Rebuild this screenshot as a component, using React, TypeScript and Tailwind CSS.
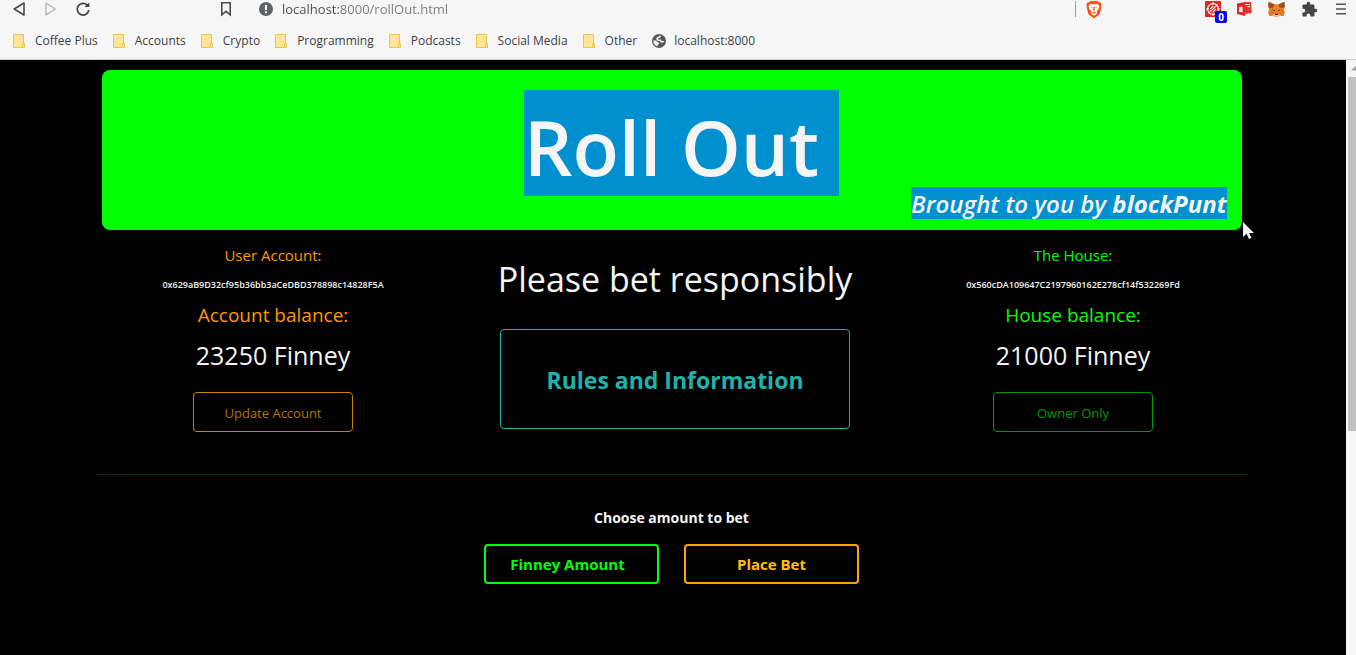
import { MdExtension } from "react-icons/md";

const bookmarks = ["Coffee Plus", "Accounts", "Crypto", "Programming", "Podcasts", "Social Media", "Other"];

function FolderIcon() {
  return (
    <svg className="h-4 w-3 shrink-0" viewBox="0 0 12 16" aria-hidden="true">
      <path d="M.5 1.5h10v13H.5z" fill="#ffe595" stroke="#e9c748" />
      <path d="M9.5 10.5h2v4h-2z" fill="#ffe595" stroke="#e9c748" />
    </svg>
  );
}

function GlobeIcon() {
  return (
    <svg width="14" height="14" viewBox="0 0 14 14" aria-hidden="true">
      <circle cx="7" cy="7" r="7" fill="#55585c" />
      <path d="M8.6 1.8 7.2 3.2 5 4.4 5.6 6l2.6.2 1 1.5h2.6" fill="none" stroke="#f6f6f6" strokeWidth="1.5" />
      <path d="M1.4 6.6h2.4l2.4 2 .9.1v1.6l-1.6.5v1.6A5.6 5.6 0 0 1 1.4 6.6z" fill="#f6f6f6" />
    </svg>
  );
}

function BraveIcon() {
  return (
    <svg width="16" height="19" viewBox="0 0 16 19" aria-hidden="true">
      <path d="M4.2 1h7.6l1.2 1.3 1.6.3L15.6 5l-.5 1.7.2 1-1.8 6.6L8 18.4l-5.5-4.1L.7 7.7l.2-1L.4 5l1-2.4L3 2.3z" fill="#fb4f14" />
      <path d="M4.4 3.8 8 4.4l3.6-.6L13.4 6l-.7 3-1.8 2 .2 2.4L8 15.7l-3.1-2.3.2-2.4-1.8-2-.7-3z" fill="#fff" />
      <path d="m4.4 6.7 2.3.3-.4.9zM11.6 6.7 9.3 7l.4.9zM7.4 6.2h1.2l.3 4L8 11l-.9-.8zM5.7 12.4 8 11.6l2.3.8L8 14z" fill="#fb6a35" />
    </svg>
  );
}

function BlockerIcon() {
  return (
    <svg width="16" height="16" viewBox="0 0 16 16" aria-hidden="true">
      <rect width="16" height="16" rx="1" fill="#e3261f" />
      <g fill="none" stroke="#fff">
        <circle cx="8" cy="8" r="5.4" strokeWidth="1.2" />
        <path d="M3.6 12.4 12.4 3.6M5 8.2l3.2-3.1M7.9 11.2l3.1-3.1M8 1v3M8 12v3M1 8h3M12 8h3" strokeWidth="1.1" />
      </g>
    </svg>
  );
}

function ReaderIcon() {
  return (
    <svg width="15" height="14" viewBox="0 0 15 14" aria-hidden="true">
      <path d="M0 1.5 8 0v14l-8-2z" fill="#e3261f" />
      <path d="M7.5 0H14l.8 11-7.3 1z" fill="#e3342b" />
      <path d="M2 5.2 5.6 4.5v6L2 9.8z" fill="#fff" />
      <path d="M8.5 2.5H13M10.5 4.7H13" stroke="#fff" strokeWidth="1" />
    </svg>
  );
}

function FoxIcon() {
  return (
    <svg width="17" height="16" viewBox="0 0 17 16" aria-hidden="true">
      <path d="m.8.8 5.6 2.4h4.2L16.2.8l.7 4-1 4 .8 3-1.4 3.4-3.4-.7-1.9 1.3H7l-1.9-1.3-3.4.7-1.4-3.4.8-3-1-4z" fill="#f08020" />
      <path d="m.8.8 5.6 2.8-.9 3-4.4.7-1-2.5zM16.2.8l-5.6 2.8.9 3 4.4.7 1-2.5z" fill="#94512c" />
      <path d="m1.2 9 4.2-.4 1 3.4-1.3 2-3.4.6L.3 12zM15.8 9l-4.2-.4-1 3.4 1.3 2 3.4.6 1.4-2.6z" fill="#e27a22" />
      <path d="m4.2 8.4 2.4.6.3 1.5zM12.8 8.4l-2.4.6-.3 1.5z" fill="#30323b" />
      <path d="m5.1 13.2 2 .1h2.8l2-.1-1.7 2.5H6.8z" fill="#d5c3b0" />
      <path d="M7.1 12.7h2.8v1.2H7.1z" fill="#2a241f" />
    </svg>
  );
}

function BrowserBar() {
  return (
    <header className="h-[60px] shrink-0 border-b border-[#cfcfcf] bg-[#f6f6f6] text-[#3d3f43]">
      <div className="flex h-[18px] items-center pl-3">
        <button aria-label="Back" className="mr-[17px]">
          <svg width="14" height="16" viewBox="0 0 14 16" fill="none" stroke="#4a4a4a" strokeWidth="1.6" strokeLinejoin="round"><path d="M12 2v12L2.2 8z" /></svg>
        </button>
        <button aria-label="Forward" className="mr-[18px]">
          <svg width="14" height="16" viewBox="0 0 14 16" fill="none" stroke="#b7b7b7" strokeWidth="1.4" strokeLinejoin="round"><path d="M3 2v12l9.3-6z" /></svg>
        </button>
        <button aria-label="Reload" className="mr-[129px]">
          <svg width="16" height="16" viewBox="0 0 16 16" fill="none" stroke="#444" strokeWidth="1.8"><path d="M12.2 4.2A5.8 5.8 0 1 0 13.8 9" /><path d="M9.6 5.9h4.7V1.4" fill="#444" stroke="none" /><circle cx="12.7" cy="4.2" r="1.5" fill="#444" stroke="none" /></svg>
        </button>
        <button aria-label="Bookmark this page" className="mr-[27px]">
          <svg width="12" height="16" viewBox="0 0 12 16" fill="none" stroke="#4a4a4a" strokeWidth="1.6"><path d="M1.8 1.8h8.4v12L6 10.4l-4.2 3.4z" /></svg>
        </button>
        <button aria-label="Site information" className="mr-[9px]">
          <svg width="14" height="14" viewBox="0 0 14 14"><circle cx="7" cy="7" r="7" fill="#5f6368" /><path d="M6 3h2v5H6zM6 9.2h2v2H6z" fill="#fff" /></svg>
        </button>
        <input
          aria-label="Address"
          defaultValue="localhost:8000/rollOut.html"
          className="h-[18px] min-w-0 flex-1 bg-[linear-gradient(to_right,#45474b_57px,#77797c_57px)] bg-clip-text text-[13px] leading-[18px] text-transparent outline-none"
        />
        <span className="mr-[10px] h-4 w-px bg-[#9a9a9a]" />
        <button aria-label="Brave Shields" className="mr-[103px]"><BraveIcon /></button>
        <button aria-label="Ad blocker, 0 blocked" className="relative mr-4">
          <BlockerIcon />
          <span className="absolute top-[10px] left-[10px] h-3 w-3 rounded-xs bg-[#0000ff] text-center text-[10px] leading-3 font-bold text-white">0</span>
        </button>
        <button aria-label="Reader" className="mr-4"><ReaderIcon /></button>
        <button aria-label="Wallet" className="mr-4"><FoxIcon /></button>
        <button aria-label="Extensions" className="mr-[18px]"><MdExtension size={17} color="#444" /></button>
        <button aria-label="Menu" className="mr-[10px]">
          <svg width="10" height="14" viewBox="0 0 10 14" stroke="#555" strokeWidth="1.6"><path d="M0 2.2h10M0 7h10M0 11.8h10" /></svg>
        </button>
      </div>
      <nav className="flex h-[46px] items-center gap-[15px] pl-[13px] text-xs">
        {bookmarks.map((name) => (
          <a key={name} href="#" className="flex items-center gap-[10px] whitespace-nowrap">
            <FolderIcon />
            {name}
          </a>
        ))}
        <a href="#" className="flex items-center gap-2"><GlobeIcon />localhost:8000</a>
      </nav>
    </header>
  );
}

type AccountProps = { title: string; address: string; label: string; balance: string; action: string; tone: string; button: string };

function Account({ title, address, label, balance, action, tone, button }: AccountProps) {
  return (
    <section className="flex flex-col items-center pt-[13px]">
      <h2 className={`text-[15px] leading-6 ${tone}`}>{title}</h2>
      <p className="mt-2 text-[9px] leading-5 font-semibold">{address}</p>
      <h3 className={`mt-1 text-[19px] leading-8 ${tone}`}>{label}</h3>
      <p className="mt-1 text-[25px] leading-10">{balance}</p>
      <button className={`mt-[17px] h-10 w-40 rounded border pt-1 text-[13px] ${button}`}>{action}</button>
    </section>
  );
}

export default function App() {
  return (
    <div className="flex min-h-screen flex-col font-['Open_Sans','Noto_Sans',sans-serif]">
      <BrowserBar />
      <div className="flex flex-1 bg-black text-[#f5f5f5]">
        <main className="min-w-0 flex-1 pt-[10px]">
          <div className="pr-[3px]">
            <div className="relative mx-auto flex h-40 max-w-[1140px] flex-col items-center rounded-lg bg-[#00ff00] pt-5">
              <h1 className="ml-5 bg-[#0090d0] pt-2 pr-5 text-[76px] leading-[98px] font-semibold">Roll Out</h1>
              <p className="-mt-[9px] mr-[15px] self-end bg-[#0090d0] pt-0.5 text-2xl leading-[30px] font-semibold italic">
                Brought to you by <b className="font-bold">blockPunt</b>
              </p>
              <svg className="absolute -right-3 -bottom-3 z-10" width="12" height="20" viewBox="0 0 12 20" aria-hidden="true">
                <path d="M1 0v15l3.6-3.3L7 17l2.4-1L7.2 11H12z" fill="#f6f6f6" />
              </svg>
            </div>
          </div>
          <div className="mx-auto grid max-w-[1200px] grid-cols-3">
            <Account
              title="User Account:"
              address="0x629aB9D32cf95b36bb3aCeDBD378898c14828F5A"
              label="Account balance:"
              balance="23250 Finney"
              action="Update Account"
              tone="text-[#ff9900]"
              button="border-[#cc8400] text-[#b37400]"
            />
            <section className="flex flex-col items-center pt-6 pl-1">
              <p className="text-[34px] leading-[50px] whitespace-nowrap">Please bet responsibly</p>
              <button className="mt-[25px] h-[100px] w-[350px] rounded border border-[#20b2aa] pt-0.5 text-[23px] font-bold text-[#20b2aa]">
                Rules and Information
              </button>
            </section>
            <Account
              title="The House:"
              address="0x560cDA109647C2197960162E278cf14f532269Fd"
              label="House balance:"
              balance="21000 Finney"
              action="Owner Only"
              tone="text-[#00ff00]"
              button="border-[#009900] text-[#009900]"
            />
          </div>
          <div className="pr-[3px]">
            <hr className="mx-auto mt-[42px] max-w-[1150px] border-[#06290f]" />
            <form className="flex flex-col items-center pt-[31px]" onSubmit={(e) => e.preventDefault()}>
              <label htmlFor="amount" className="text-sm leading-6 font-bold">Choose amount to bet</label>
              <div className="mt-[14px] flex gap-[25px]">
                <input
                  id="amount"
                  placeholder="Finney Amount"
                  className="h-10 w-[175px] rounded border-2 border-[#00ff00] bg-transparent pr-2 text-center text-[15px] font-bold text-[#00ff00] outline-none placeholder:text-[#00ff00]"
                />
                <button className="h-10 w-[175px] rounded border-2 border-[#ffa500] text-[15px] font-bold text-[#ffc000]">Place Bet</button>
              </div>
            </form>
          </div>
        </main>
        <div className="w-[10px] overflow-hidden bg-[#f5f5f5] pl-0.5" aria-hidden="true">
          <svg className="h-[17px] w-[17px]" viewBox="0 0 17 17"><path d="M3 10.5h9L7.5 6z" fill="#a3a3a3" /></svg>
          <div className="h-[354px] bg-[#c1c1c1]" />
        </div>
      </div>
    </div>
  );
}
